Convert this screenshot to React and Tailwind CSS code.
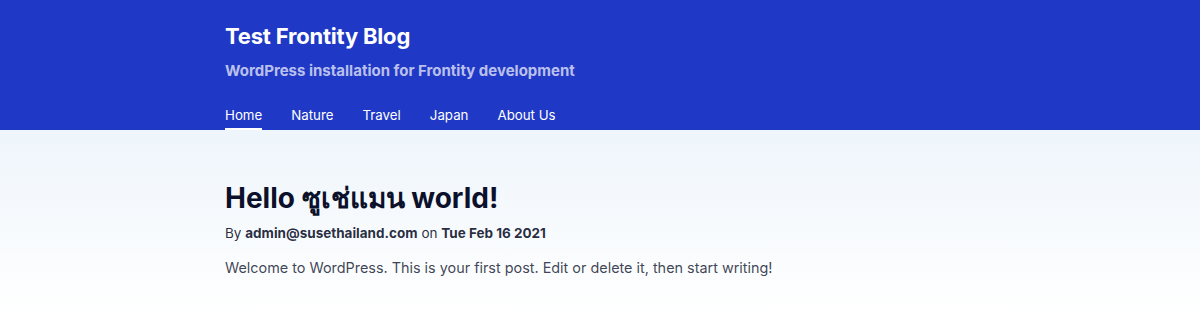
import React from 'react';

const navItems = ['Home', 'Nature', 'Travel', 'Japan', 'About Us'];

const App = () => {
  return (
    <div className="min-h-screen bg-white font-['Inter','Noto_Sans',sans-serif]">
      {/* header */}
      <header className="bg-[#1f38c5] text-white">
        <div className="mx-auto w-[800px] pl-[25px] pt-[22px]">
          <h2 className="text-[22px] font-bold leading-[28px] tracking-[-0.2px]">Test Frontity Blog</h2>
          <h4 className="mt-[11px] text-[15px] font-bold leading-[20px] text-white/70">
            WordPress installation for Frontity development
          </h4>
          <nav className="mt-[24px] flex gap-[29px] text-[13.3px]">
            {navItems.map((item, i) => (
              <a
                key={item}
                className={`pb-[3px] leading-[20px] border-b-2 ${i === 0 ? 'border-white' : 'border-transparent'}`}
              >
                {item}
              </a>
            ))}
          </nav>
        </div>
      </header>

      {/* post */}
      <main className="bg-gradient-to-b from-[#eef5fb] to-white h-[185px]">
        <div className="mx-auto w-[800px] pl-[25px] pt-[50px]">
          <h1 className="text-[28px] font-bold leading-[36px] text-[#0c112b]">Hello ซูเช่แมน world!</h1>
          <p className="mt-[8px] text-[13.5px] leading-[18px] text-[#0c112b]/90">
            By <b>admin@susethailand.com</b> on <b>Tue Feb 16 2021</b>
          </p>
          <p className="mt-[15px] text-[14.4px] leading-[22px] text-[#0c112b]/80">
            Welcome to WordPress. This is your first post. Edit or delete it, then start writing!
          </p>
        </div>
      </main>
    </div>
  );
};

export default App;
